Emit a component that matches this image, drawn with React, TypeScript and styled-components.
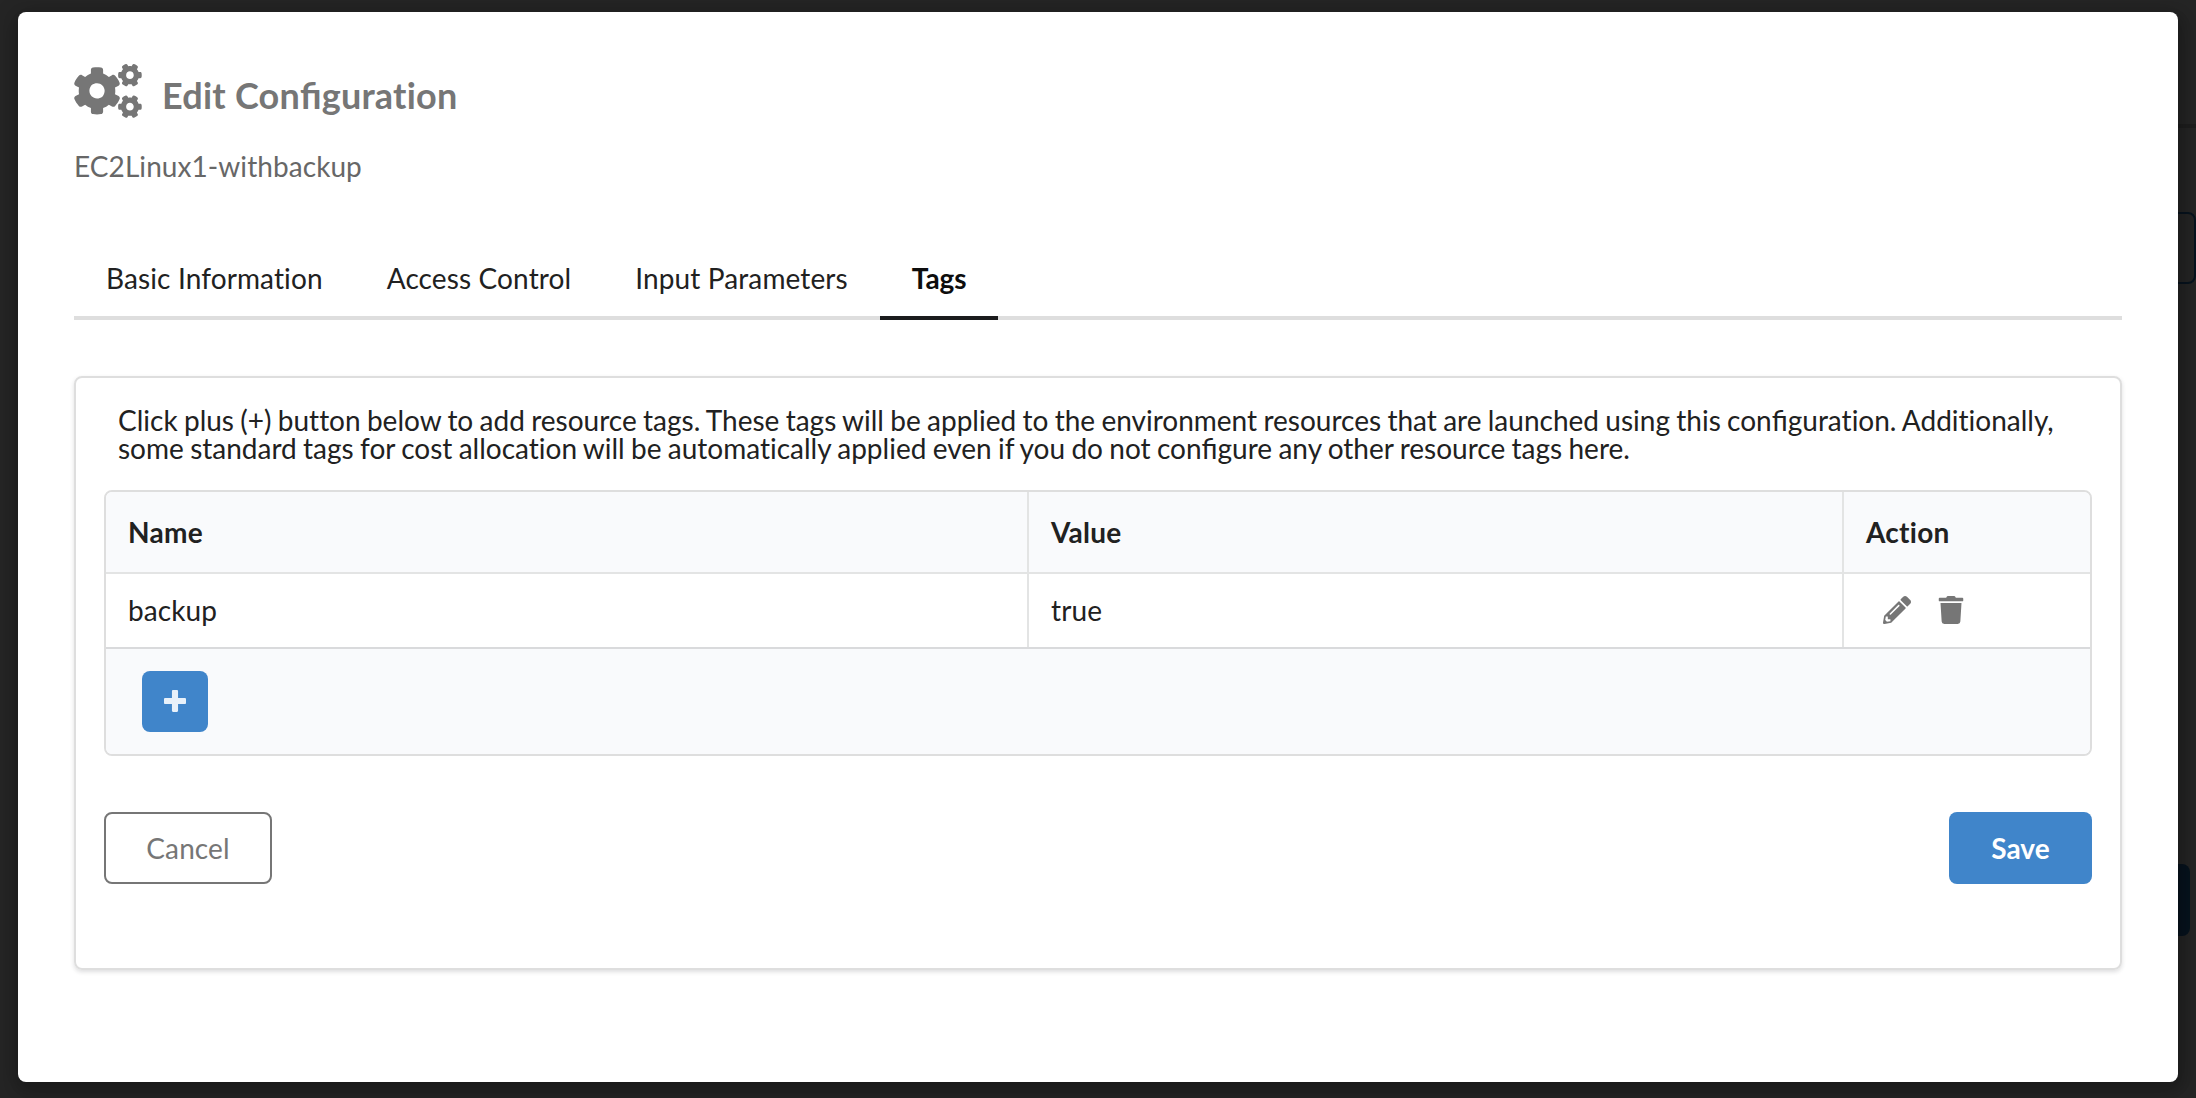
import React from "react";
import styled, { createGlobalStyle } from "styled-components";
import { FaCogs, FaPencilAlt, FaTrash } from "react-icons/fa";

const GlobalStyle = createGlobalStyle`
  *, *::before, *::after { box-sizing: border-box; }
  body {
    margin: 0;
    overflow: hidden;
    background: #252525;
    color: #212121;
    font-family: Lato, "Open Sans", sans-serif;
    font-size: 28px;
    font-variant-ligatures: no-common-ligatures;
    line-height: 36px;
  }
`;

const Page = styled.div`
  position: relative;
  height: 1098px;
  padding: 12px 18px 16px;
  overflow: hidden;
`;

const Backdrop = styled.div`
  position: absolute;
  inset: 0;
  display: flex;
  flex-direction: column;
  align-items: flex-end;
  padding-top: 124px;
`;

const BackdropRule = styled.div`
  width: 168px;
  height: 4px;
  background: #1e1e1e;
`;

const BackdropOutline = styled.div`
  width: 168px;
  height: 72px;
  margin-top: 84px;
  border: 2px solid #07131e;
  border-radius: 8px;
`;

const BackdropButton = styled.div`
  width: 144px;
  height: 72px;
  margin: 580px 6px 0 0;
  background: #07131e;
  border-radius: 8px;
`;

const Modal = styled.section`
  position: relative;
  height: 1070px;
  padding: 52px 56px 0;
  background: #fff;
  border-radius: 8px;
  box-shadow: 2px 6px 14px 4px rgba(0, 0, 0, 0.2), 2px 6px 30px 4px rgba(0, 0, 0, 0.12);
`;

const Header = styled.header`
  display: flex;
  align-items: flex-start;
  height: 54px;
  color: #767676;
`;

const CogsIcon = styled(FaCogs)`
  flex: none;
  width: 68px;
  height: 54px;
`;

const Title = styled.h3`
  margin: 8px 0 0 20px;
  font-size: 36px;
  font-weight: 700;
  line-height: 46px;
  letter-spacing: 0.23px;
`;

const Subtitle = styled.p`
  margin: 30px 0 0;
  color: #676767;
  letter-spacing: 0.07px;
`;

const Ligature = styled.span`
  display: inline-block;
  letter-spacing: 0;
  font-variant-ligatures: common-ligatures;
`;

const Tabs = styled.nav`
  display: flex;
  height: 66px;
  margin-top: 70px;
  border-bottom: 4px solid #dedede;
`;

const Tab = styled.button<{ $active?: boolean }>`
  height: 66px;
  padding: 6px 32px 20px;
  border: 0;
  border-bottom: 4px solid ${(p) => (p.$active ? "#1b1c1d" : "transparent")};
  background: none;
  color: ${(p) => (p.$active ? "#0d0d0d" : "#212121")};
  font: inherit;
  font-variant-ligatures: inherit;
  font-weight: ${(p) => (p.$active ? 700 : 400)};
  letter-spacing: ${(p) => (p.$active ? -0.1 : 0.12)}px;
`;

const Segment = styled.div`
  height: 594px;
  margin-top: 56px;
  padding: 28px 28px 0;
  border: 2px solid #dedede;
  border-radius: 8px;
  box-shadow: 0 2px 4px rgba(34, 36, 38, 0.15);
`;

const Help = styled.p`
  margin: 0 12px 28px 14px;
  line-height: 28px;
  word-spacing: -0.85px;
`;

const TableFrame = styled.div`
  border: 2px solid #dedede;
  border-radius: 8px;
  overflow: hidden;
`;

const Row = styled.div<{ $head?: boolean }>`
  display: grid;
  grid-template-columns: 921px 815px 1fr;
  height: ${(p) => (p.$head ? 82 : 75)}px;
  background: ${(p) => (p.$head ? "#f9fafc" : "#fff")};
  border-bottom: 2px solid ${(p) => (p.$head ? "#e3e4e4" : "#d9dadc")};
  font-weight: ${(p) => (p.$head ? 700 : 400)};
  letter-spacing: ${(p) => (p.$head ? 0.27 : 0.1)}px;
`;

const Cell = styled.div`
  display: flex;
  align-items: center;
  padding: 0 22px 1px;
  & + & {
    border-left: 2px solid #e3e4e4;
  }
`;

const Actions = styled.div`
  display: flex;
  align-items: center;
  gap: 26px;
  padding-left: 17px;
  color: #767676;
`;

const TableFooter = styled.div`
  height: 105px;
  padding: 22px 36px;
  background: #f9fafc;
`;

const AddButton = styled.button`
  display: flex;
  align-items: center;
  justify-content: center;
  width: 66px;
  height: 61px;
  padding: 0 0 1px;
  border: 0;
  border-radius: 8px;
  background: #4085ca;
  color: #e8f1fa;
`;

const Footer = styled.footer`
  display: flex;
  justify-content: space-between;
  margin-top: 56px;
`;

const Button = styled.button<{ $primary?: boolean }>`
  width: ${(p) => (p.$primary ? 143 : 168)}px;
  height: 72px;
  padding: 0;
  border: ${(p) => (p.$primary ? "0" : "2px solid #767676")};
  border-radius: 8px;
  background: ${(p) => (p.$primary ? "#4085ca" : "transparent")};
  color: ${(p) => (p.$primary ? "#fff" : "#767676")};
  font: inherit;
  font-weight: ${(p) => (p.$primary ? 700 : 400)};
  line-height: 28px;
  letter-spacing: 0.1px;
`;

const PlusIcon = () => (
  <svg width="22" height="22" viewBox="0 32 448 448" fill="currentColor">
    <path d="M448 294.2v-76.4c0-13.3-10.7-24-24-24H286.2V56c0-13.3-10.7-24-24-24h-76.4c-13.3 0-24 10.7-24 24v137.8H24c-13.3 0-24 10.7-24 24v76.4c0 13.3 10.7 24 24 24h137.8V456c0 13.3 10.7 24 24 24h76.4c13.3 0 24-10.7 24-24V318.2H424c13.3 0 24-10.7 24-24z" />
  </svg>
);

const tabs = ["Basic Information", "Access Control", "Input Parameters", "Tags"];
const tags = [{ name: "backup", value: "true" }];

export default function App() {
  return (
    <Page>
      <GlobalStyle />
      <Backdrop aria-hidden>
        <BackdropRule />
        <BackdropOutline />
        <BackdropButton />
      </Backdrop>
      <Modal>
        <Header>
          <CogsIcon />
          <Title>
            Edit Con<Ligature>fi</Ligature>guration
          </Title>
        </Header>
        <Subtitle>EC2Linux1-withbackup</Subtitle>
        <Tabs>
          {tabs.map((t) => (
            <Tab key={t} $active={t === "Tags"}>
              {t}
            </Tab>
          ))}
        </Tabs>
        <Segment>
          <Help>
            Click plus (+) button below to add resource tags. These tags will be applied to the
            environment resources that are launched using this con<Ligature>fi</Ligature>guration.
            Additionally, some standard tags for cost allocation will be automatically applied even
            if you do not con<Ligature>fi</Ligature>gure any other resource tags here.
          </Help>
          <TableFrame>
            <Row $head>
              <Cell>Name</Cell>
              <Cell>Value</Cell>
              <Cell>Action</Cell>
            </Row>
            {tags.map((t) => (
              <Row key={t.name}>
                <Cell>{t.name}</Cell>
                <Cell>{t.value}</Cell>
                <Cell>
                  <Actions>
                    <FaPencilAlt size={28} />
                    <FaTrash size={28} />
                  </Actions>
                </Cell>
              </Row>
            ))}
            <TableFooter>
              <AddButton aria-label="Add tag">
                <PlusIcon />
              </AddButton>
            </TableFooter>
          </TableFrame>
          <Footer>
            <Button>Cancel</Button>
            <Button $primary>Save</Button>
          </Footer>
        </Segment>
      </Modal>
    </Page>
  );
}
